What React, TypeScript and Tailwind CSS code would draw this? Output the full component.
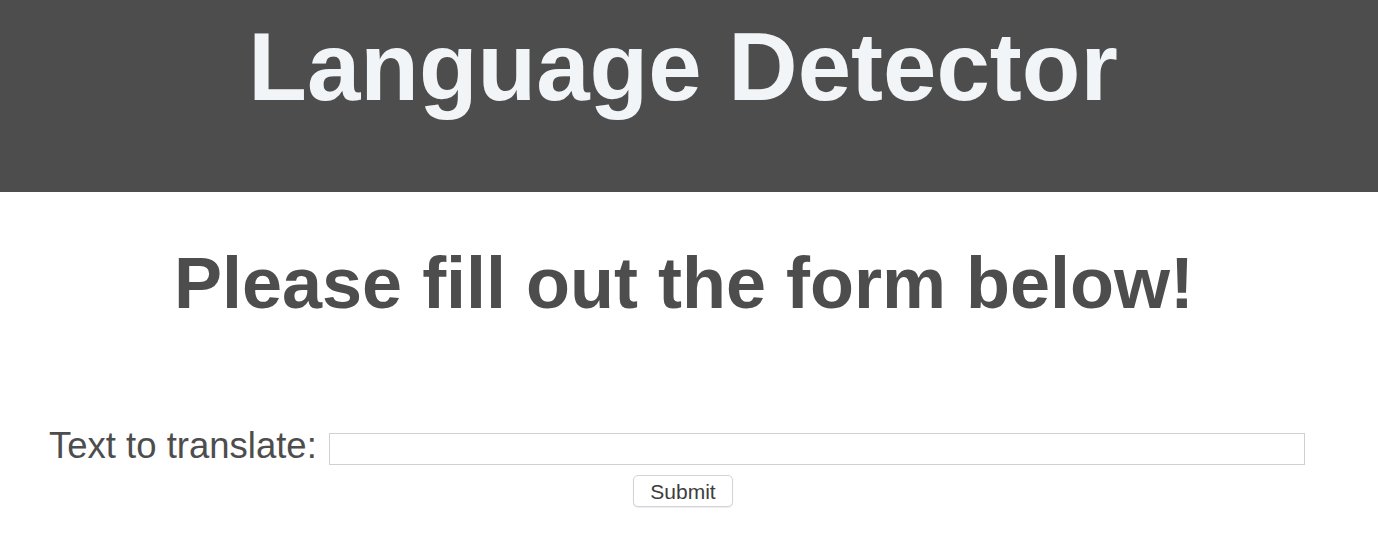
import React, { useState } from "react";

export default function App() {
  const [text, setText] = useState("");

  return (
    <div className="min-h-[550px] bg-white font-['Liberation_Sans',Arial,sans-serif] text-[#4d4d4d]">
      {/* Header */}
      <header className="h-[192px] bg-[#4d4d4d] pt-[12px] pr-[12px]">
        <h1 className="text-center text-[96px] font-bold leading-[110px] text-[#f2f5f7]">
          Language Detector
        </h1>
      </header>

      <h2 className="mt-[50px] pr-[10px] text-center text-[72px] font-bold leading-[83px]">
        Please fill out the form below!
      </h2>

      {/* Form */}
      <form
        className="mt-[100px] ml-[49px] w-[1268px]"
        onSubmit={(e) => e.preventDefault()}
      >
        <div className="flex items-start">
          <label htmlFor="text" className="text-[36.5px] leading-[41px]">
            Text to translate:
          </label>
          <input
            id="text"
            type="text"
            value={text}
            onChange={(e) => setText(e.target.value)}
            className="ml-[12px] mt-[8px] h-[32px] w-[976px] border border-[#d0d0d0] bg-white px-2 text-[18px] outline-none"
          />
        </div>
        <div className="mt-[9px] flex justify-center">
          <button
            type="submit"
            className="h-[32px] w-[100px] rounded-[5px] border border-[#d4d4d4] bg-white text-[21px] leading-none text-[#3d3d3d] shadow-[0_1px_1px_rgba(0,0,0,0.08)]"
          >
            Submit
          </button>
        </div>
      </form>
    </div>
  );
}
